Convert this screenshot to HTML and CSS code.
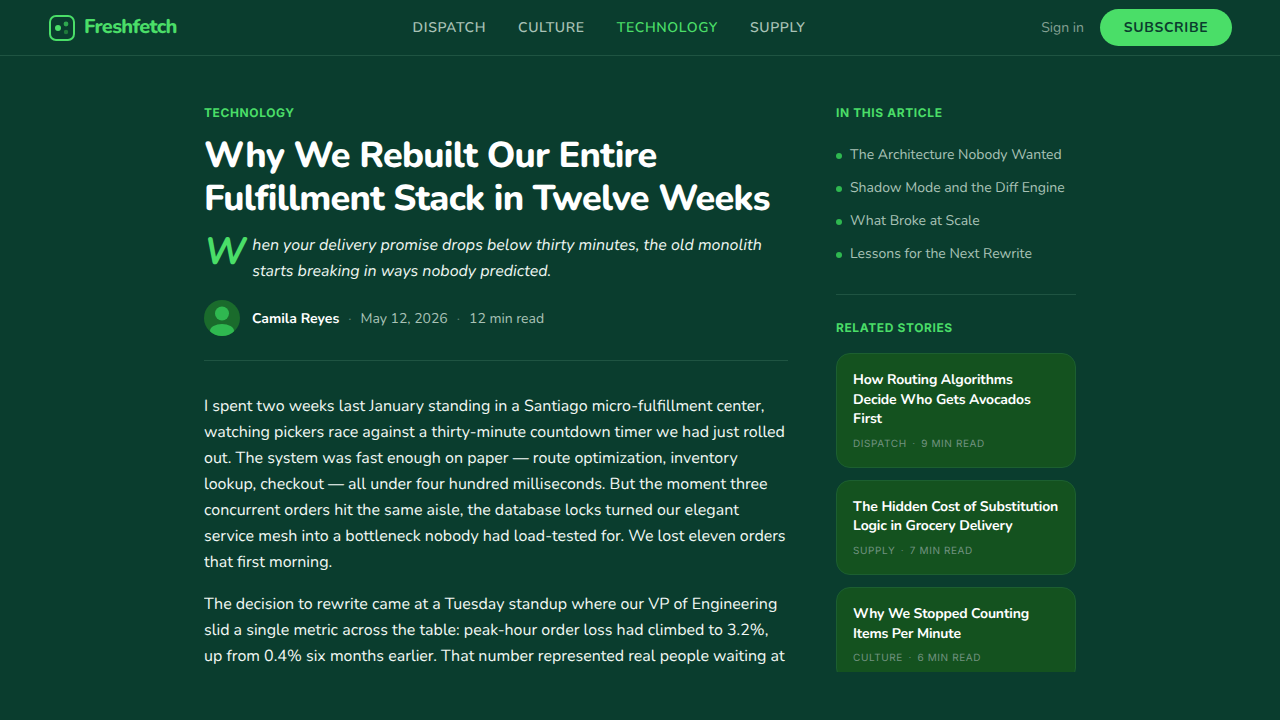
FILE: index.html
```html
<!DOCTYPE html>
<html lang="en">
<head>
    <meta charset="UTF-8">
    <meta name="viewport" content="width=device-width, initial-scale=1.0">
    <title>Freshfetch - Why We Rebuilt Our Entire Fulfillment Stack</title>
    <link rel="stylesheet" href="styles.css">
</head>
<body>
    <header class="topbar">
        <a class="logo" href="#">
            <svg class="logo-icon" width="28" height="28" viewBox="0 0 28 28" fill="none">
                <rect x="2" y="2" width="24" height="24" rx="6" stroke="#4ade68" stroke-width="2"/>
                <circle cx="10" cy="14" r="3" fill="#4ade68"/>
                <circle cx="18" cy="10" r="2.4" fill="#2fa84f"/>
                <circle cx="18" cy="18" r="2.2" fill="#1f7a3a"/>
            </svg>
            <span>Freshfetch</span>
        </a>
        <nav class="nav">
            <a href="#">DISPATCH</a>
            <a href="#">CULTURE</a>
            <a href="#" class="active">TECHNOLOGY</a>
            <a href="#">SUPPLY</a>
        </nav>
        <div class="actions">
            <a href="#" class="signin">Sign in</a>
            <button class="subscribe">SUBSCRIBE</button>
        </div>
    </header>

    <main class="layout">
        <article class="article">
            <p class="label">TECHNOLOGY</p>
            <h1 class="title">Why We Rebuilt Our Entire Fulfillment Stack in Twelve Weeks</h1>
            <p class="deck">When your delivery promise drops below thirty minutes, the old monolith starts breaking in ways nobody predicted.</p>
            <div class="byline">
                <svg class="avatar" width="36" height="36" viewBox="0 0 36 36">
                    <clipPath id="avatar-clip"><circle cx="18" cy="18" r="18"/></clipPath>
                    <g clip-path="url(#avatar-clip)">
                        <rect width="36" height="36" fill="#1a6b2c"/>
                        <circle cx="18" cy="13.5" r="7" fill="#2fb850"/>
                        <ellipse cx="18" cy="31" rx="12" ry="7" fill="#2fb850"/>
                    </g>
                </svg>
                <span class="author">Camila Reyes</span>
                <span class="dot">·</span>
                <span>May 12, 2026</span>
                <span class="dot">·</span>
                <span>12 min read</span>
            </div>
            <div class="body">
                <p>I spent two weeks last January standing in a Santiago micro-fulfillment center, watching pickers race against a thirty-minute countdown timer we had just rolled out. The system was fast enough on paper — route optimization, inventory lookup, checkout — all under four hundred milliseconds. But the moment three concurrent orders hit the same aisle, the database locks turned our elegant service mesh into a bottleneck nobody had load-tested for. We lost eleven orders that first morning.</p>
                <p>The decision to rewrite came at a Tuesday standup where our VP of Engineering slid a single metric across the table: peak-hour order loss had climbed to 3.2%, up from 0.4% six months earlier. That number represented real people waiting at</p>
            </div>
        </article>

        <aside class="sidebar">
            <section class="toc">
                <p class="label">IN THIS ARTICLE</p>
                <ul class="toc-list">
                    <li>The Architecture Nobody Wanted</li>
                    <li>Shadow Mode and the Diff Engine</li>
                    <li>What Broke at Scale</li>
                    <li>Lessons for the Next Rewrite</li>
                </ul>
            </section>
            <section class="related">
                <p class="label">RELATED STORIES</p>
                <div class="story">
                    <h3>How Routing Algorithms Decide Who Gets Avocados First</h3>
                    <p class="meta"><span>DISPATCH</span><span class="dot">·</span><span>9 MIN READ</span></p>
                </div>
                <div class="story">
                    <h3>The Hidden Cost of Substitution Logic in Grocery Delivery</h3>
                    <p class="meta"><span>SUPPLY</span><span class="dot">·</span><span>7 MIN READ</span></p>
                </div>
                <div class="story">
                    <h3>Why We Stopped Counting Items Per Minute</h3>
                    <p class="meta"><span>CULTURE</span><span class="dot">·</span><span>6 MIN READ</span></p>
                </div>
            </section>
        </aside>
    </main>
</body>
</html>
```

FILE: styles.css
```css
* {
    margin: 0;
    padding: 0;
    box-sizing: border-box;
}

body {
    background: #0a3d2e;
    color: #fff;
    font-family: 'Nunito', 'Nunito Sans', 'Lato', sans-serif;
    text-rendering: geometricPrecision;
    height: 720px;
    overflow: hidden;
}

a {
    color: inherit;
    text-decoration: none;
}

.topbar {
    height: 56px;
    padding: 0 48px;
    display: flex;
    justify-content: space-between;
    align-items: center;
    border-bottom: 1px solid #1f5442;
}

.logo {
    display: flex;
    align-items: center;
    gap: 8px;
    color: #4ade68;
    font-size: 20px;
    font-weight: 800;
    letter-spacing: -0.7px;
}

.nav {
    display: flex;
    gap: 32px;
    font-size: 14px;
    font-weight: 600;
    letter-spacing: 0.64px;
    color: #a9c2b6;
}

.nav .active {
    color: #4ade68;
}

.actions {
    display: flex;
    align-items: center;
    gap: 16px;
}

.signin {
    font-size: 14px;
    color: #84a093;
}

.subscribe {
    width: 132px;
    height: 37px;
    border: 0;
    border-radius: 19px;
    background: #4ade68;
    color: #0a3d2e;
    font-family: inherit;
    font-size: 14px;
    font-weight: 700;
    letter-spacing: 0.65px;
}

.layout {
    width: 872px;
    height: 616px;
    margin: 0 auto;
    padding-top: 48px;
    display: flex;
    gap: 48px;
    overflow: hidden;
}

.article {
    width: 584px;
    flex-shrink: 0;
}

.label {
    font-family: 'Inter', sans-serif;
    font-size: 12px;
    font-weight: 700;
    letter-spacing: 0.6px;
    line-height: 18px;
    color: #4ade68;
}

.title {
    margin-top: 12px;
    font-size: 36px;
    font-weight: 800;
    line-height: 43.2px;
    letter-spacing: -0.72px;
}

.deck {
    margin-top: 12px;
    font-size: 16px;
    font-style: italic;
    line-height: 26px;
    color: #eef6f1;
}

.deck::first-letter {
    float: left;
    font-size: 38px;
    line-height: 42px;
    font-weight: 700;
    color: #4ade68;
    padding-right: 6px;
}

.byline {
    margin-top: 16px;
    padding-bottom: 24px;
    border-bottom: 1px solid #1f5442;
    display: flex;
    align-items: center;
    gap: 9px;
    font-size: 14px;
    color: #a9c2b6;
}

.avatar {
    margin-right: 3px;
}

.author {
    color: #fff;
    font-weight: 700;
}

.dot {
    color: #5f8474;
}

.body {
    margin-top: 32px;
    font-size: 16px;
    line-height: 26px;
    color: #f2f8f4;
}

.body p {
    margin-bottom: 16px;
}

.sidebar {
    width: 240px;
    flex-shrink: 0;
}

.toc {
    padding-bottom: 24px;
    border-bottom: 1px solid #1f5442;
}

.toc-list {
    list-style: none;
    margin-top: 16px;
}

.toc-list li {
    display: flex;
    align-items: center;
    gap: 8px;
    height: 33px;
    font-size: 14px;
    color: #a9c2b6;
}

.toc-list li::before {
    content: "";
    width: 6px;
    height: 6px;
    margin-top: 3px;
    border-radius: 50%;
    background: #2fb850;
}

.related {
    margin-top: 24px;
}

.story {
    margin-top: 12px;
    padding: 16px;
    background: #14521f;
    border: 1px solid #1c5f30;
    border-radius: 14px;
}

.related .label + .story {
    margin-top: 16px;
}

.story h3 {
    font-size: 14px;
    font-weight: 700;
    line-height: 19.6px;
    letter-spacing: -0.15px;
}

.meta {
    margin-top: 8px;
    display: flex;
    gap: 5.5px;
    font-family: 'Inter', sans-serif;
    font-size: 10px;
    line-height: 14px;
    letter-spacing: 0.6px;
    color: #729280;
}
```
